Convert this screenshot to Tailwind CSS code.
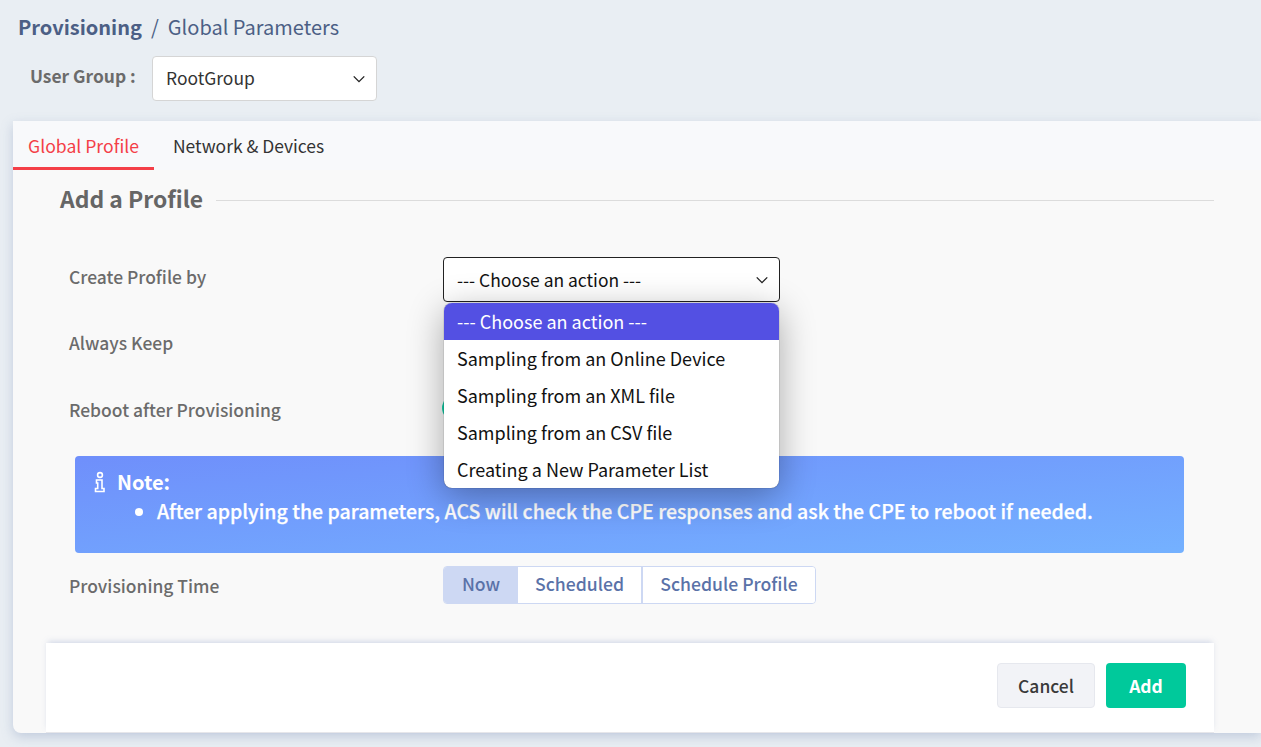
<!DOCTYPE html>
<html><head><meta charset="utf-8">
<script src="https://cdn.jsdelivr.net/npm/@tailwindcss/browser@4"></script>
</head>
<body class="m-0 h-[747px] w-[1261px] overflow-hidden bg-[#e9eef3] font-['Noto_Sans_CJK_TC','Noto_Sans',sans-serif]">
<div class="flex h-[56px] items-start pl-[18px] pt-[11px] text-[20px] leading-[32px] text-[#4c5f85]">
  <span class="font-bold">Provisioning</span><span class="mx-[9px]">/</span><span>Global Parameters</span>
</div>
<div class="flex h-[65px] items-start">
  <span class="ml-[30px] mt-[6px] w-[122px] text-[17.4px] font-bold leading-[28px] text-[#6b6b6b]">User Group :</span>
  <div class="flex h-[45px] w-[225px] items-center justify-between rounded-[4px] border border-[#d5d5d5] bg-white pl-[13px] pr-[10px] text-[17.44px] text-[#333]">
    <span>RootGroup</span>
    <svg width="14" height="14" viewBox="0 0 16 16" fill="none" stroke="#222" stroke-width="1.6"><path d="M2 5l6 6 6-6"/></svg>
  </div>
</div>
<main class="relative ml-[13px] h-[612px] w-[1248px] rounded-bl-[8px] bg-[#f9f9f9] shadow-[0_4px_12px_rgba(120,140,180,0.35)]">
  <div class="flex h-[49px] rounded-t-[2px] bg-[#f8f9fb]">
    <div class="h-[49px] w-[141px] border-b-[3px] border-[#f43f48] pt-[11px] text-center text-[17.6px] leading-[28px] text-[#f43f48]">Global Profile</div>
    <div class="ml-[19px] pt-[11px] text-[17.44px] leading-[28px] text-[#333]">Network &amp; Devices</div>
  </div>
  <div class="flex h-[60px] items-center pb-[2px] pl-[47px] pr-[47px]">
    <h2 class="-mt-[2px] text-[22.88px] font-bold leading-[36px] text-[#666]">Add a Profile</h2>
    <div class="ml-[13px] mt-[2px] h-px flex-1 bg-[#dcdcdc]"></div>
  </div>
  <div class="relative pl-[56px] pt-[19px]">
    <div class="flex h-[66px] items-start">
      <span class="mt-[14px] w-[374px] text-[17.44px] font-medium leading-[28px] text-[#6b6b6b]">Create Profile by</span>
      <div class="mt-[8px] flex h-[45px] w-[337px] items-center justify-between rounded-[4px] border border-[#222] bg-white pl-[13px] pr-[10px] text-[17.44px] text-[#111]">
        <span class="mt-[2px]">--- Choose an action ---</span>
        <svg width="14" height="14" viewBox="0 0 16 16" fill="none" stroke="#222" stroke-width="1.6"><path d="M2 5l6 6 6-6"/></svg>
      </div>
    </div>
    <div class="flex h-[67px] items-start">
      <span class="mt-[14px] w-[374px] text-[17.44px] font-medium leading-[28px] text-[#6b6b6b]">Always Keep</span>
      <div class="ml-[1px] mt-[12px] h-[24px] w-[44px] rounded-full bg-[#d8dbe1]"></div>
    </div>
    <div class="flex h-[74px] items-start">
      <span class="mt-[14px] w-[374px] text-[17.44px] font-medium leading-[28px] text-[#6b6b6b]">Reboot after Provisioning</span>
      <div class="-ml-px mt-[14px] h-[24px] w-[44px] rounded-full bg-[#14d0a8]"></div>
    </div>
  </div>
  <div class="ml-[62px] h-[97px] w-[1109px] rounded-[4px] bg-gradient-to-br from-[#6f8ffb] to-[#74b1ff] pl-[19px] pt-[11px] text-white">
    <div class="flex h-[29px] items-center text-[20px] font-bold leading-[29px]">
      <svg class="mr-[11px]" width="12" height="22" viewBox="0 0 12 22" fill="none" stroke="#fff" stroke-width="1.6"><circle cx="6" cy="4" r="2.4"/><path d="M2.500 9h5.500v8.500h2v3h-8.500v-3h2.200v-5.500h-1.200z"/></svg>
      <span>Note:</span>
    </div>
    <ul class="list-disc pl-[63px] text-[19.52px] font-medium leading-[29px] [-webkit-text-stroke:0.25px_white]">
      <li>After applying the parameters, ACS will check the CPE responses and ask the CPE to reboot if needed.</li>
    </ul>
  </div>
  <div class="flex h-[90px] items-start pl-[56px] pt-[13px]">
    <span class="mt-[6px] w-[374px] text-[17.44px] font-medium leading-[28px] text-[#6b6b6b]">Provisioning Time</span>
    <div class="flex h-[38px] items-stretch overflow-hidden rounded-[4px] border border-[#cdd8f3] text-[17.6px] font-medium text-[#5a72a8]">
      <span class="flex w-[74px] items-center justify-center bg-[#cdd8f3] pb-[2px]">Now</span>
      <span class="flex w-[125px] items-center justify-center border-r-2 border-[#cdd8f3] bg-white pb-[2px]">Scheduled</span>
      <span class="flex w-[172px] items-center justify-center bg-white pb-[2px]">Schedule Profile</span>
    </div>
  </div>
  <div class="ml-[33px] flex h-[90px] w-[1168px] items-start justify-end gap-[11px] border-b border-[#e6e6ea] bg-white pr-[28px] pt-[20px] shadow-[0_-3px_6px_-2px_rgba(120,140,190,0.35)]">
    <button class="h-[45px] w-[98px] rounded-[4px] border border-[#e6e8ee] bg-[#f2f3f7] pt-[2px] text-[17.44px] font-medium text-[#3a3a3a]">Cancel</button>
    <button class="h-[45px] w-[80px] rounded-[4px] bg-[#00c99b] pt-[2px] text-[17.44px] font-bold text-white">Add</button>
  </div>
  <ul class="absolute left-[431px] top-[182px] w-[335px] overflow-hidden rounded-[8px] bg-white text-[18px] leading-[37px] text-[#111] shadow-[0_0_1px_rgba(0,0,0,0.7),0_8px_36px_rgba(0,0,0,0.33)]">
    <li class="h-[37px] bg-[#5350e3] pl-[13px] text-white">--- Choose an action ---</li>
    <li class="h-[37px] pl-[13px]">Sampling from an Online Device</li>
    <li class="h-[37px] pl-[13px]">Sampling from an XML file</li>
    <li class="h-[37px] pl-[13px]">Sampling from an CSV file</li>
    <li class="h-[37px] pl-[13px]">Creating a New Parameter List</li>
  </ul>
</main>
</body></html>
